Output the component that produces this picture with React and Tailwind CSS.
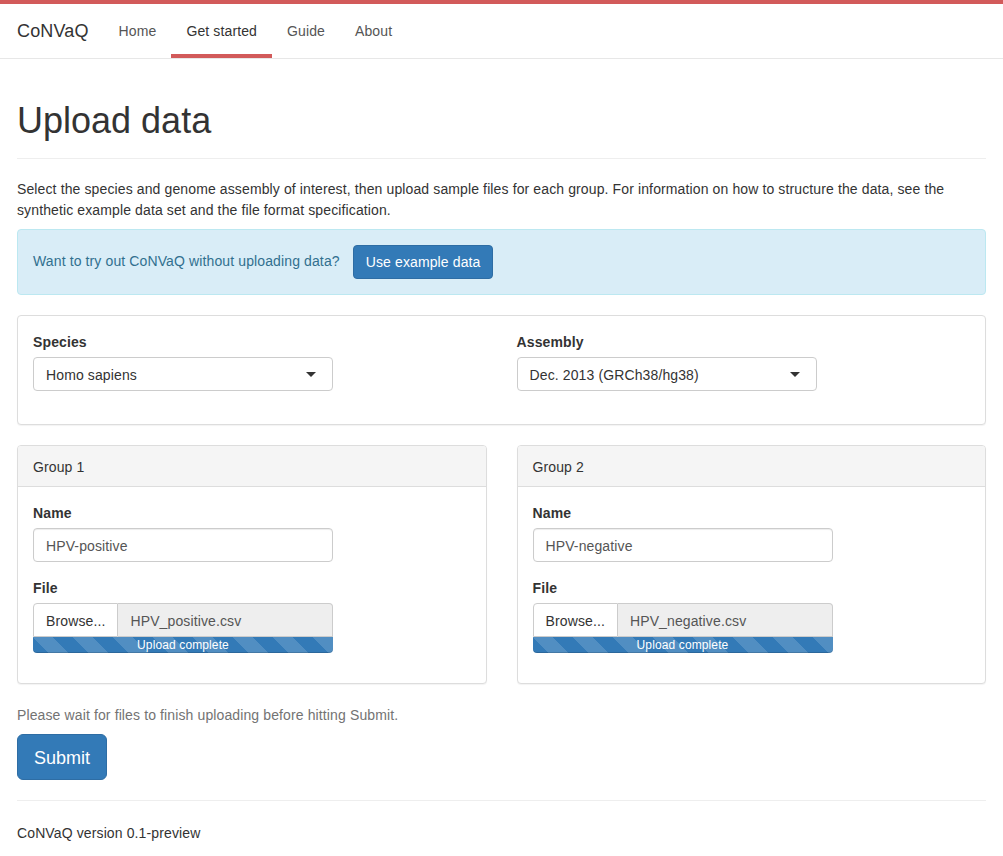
import React from "react";

const font = { fontFamily: '"Liberation Sans", Arial, Helvetica, sans-serif' };

function Caret() {
  return (
    <svg width="10" height="5" viewBox="0 0 10 5" className="block">
      <path d="M0 0 L10 0 L5 5 Z" fill="#333" />
    </svg>
  );
}

function SelectBox({ value }) {
  return (
    <div className="w-[300px] h-[34px] border border-[#ccc] rounded-[4px] bg-white flex items-center justify-between pl-[12px] pr-[16px] pt-[1px] text-[14px] leading-[20px] text-[#333]">
      <span>{value}</span>
      <Caret />
    </div>
  );
}

function Label({ children }) {
  return <div className="text-[14px] leading-[20px] font-bold text-[#333] mb-[5px]">{children}</div>;
}

function GroupPanel({ title, name, file }) {
  return (
    <div className="border border-[#ddd] rounded-[4px] bg-white shadow-[0_1px_1px_rgba(0,0,0,0.05)]">
      <div className="bg-[#f5f5f5] border-b border-[#ddd] rounded-t-[3px] px-[15px] pt-[11px] pb-[9px] text-[14px] leading-[20px] text-[#333]">
        {title}
      </div>
      <div className="px-[15px] pt-[16px] pb-[15px]">
        <div className="mb-[16px]">
          <Label>Name</Label>
          <div className="w-[300px] h-[34px] border border-[#ccc] rounded-[4px] bg-white flex items-center px-[12px] pt-[2px] text-[14px] text-[#555] shadow-[inset_0_1px_1px_rgba(0,0,0,0.075)]">
            {name}
          </div>
        </div>
        <div className="mb-[15px]">
          <Label>File</Label>
          <div className="w-[300px]">
            <div className="flex h-[34px]">
              <div className="h-[34px] border border-[#ccc] rounded-tl-[4px] bg-white flex items-center px-[12px] pt-[2px] text-[14px] text-[#333]">
                Browse...
              </div>
              <div className="flex-1 h-[34px] border border-l-0 border-[#ccc] rounded-tr-[4px] bg-[#eee] flex items-center px-[12px] pt-[2px] text-[14px] text-[#555]">
                {file}
              </div>
            </div>
            <div
              className="h-[16px] rounded-b-[4px] bg-[#337ab7] text-white text-[12px] leading-[16px] text-center shadow-[inset_0_-1px_0_rgba(0,0,0,0.15)]"
              style={{
                backgroundImage:
                  "linear-gradient(45deg, rgba(255,255,255,.15) 25%, transparent 25%, transparent 50%, rgba(255,255,255,.15) 50%, rgba(255,255,255,.15) 75%, transparent 75%, transparent)",
                backgroundSize: "40px 40px",
              }}
            >
              Upload complete
            </div>
          </div>
        </div>
      </div>
    </div>
  );
}

export default function App() {
  return (
    <div style={font} className="min-h-[856px] bg-white text-[#333] text-[14px] tracking-[0.12px]">
      {/* Navbar */}
      <div className="border-t-4 border-[#d25a5a] bg-white border-b border-b-[#e7e7e7]">
        <div className="h-[54px] flex items-start pl-[17px]">
          <div className="pt-[17px] text-[18px] leading-[20px] text-[#333] pr-[15px] tracking-[0.15px]">CoNVaQ</div>
          <div className="h-[54px] px-[15px] pt-[17px] text-[14px] leading-[20px] text-[#555]">Home</div>
          <div className="h-[54px] px-[15px] pt-[17px] text-[14px] leading-[20px] text-[#333] border-b-4 border-[#d25a5a]">
            Get started
          </div>
          <div className="h-[54px] px-[15px] pt-[17px] text-[14px] leading-[20px] text-[#555]">Guide</div>
          <div className="h-[54px] px-[15px] pt-[17px] text-[14px] leading-[20px] text-[#555]">About</div>
        </div>
      </div>

      <div className="px-[17px]">
        <div className="mt-[42px] pb-[17px] border-b border-[#eee]">
          <h1 className="text-[36px] leading-[40px] font-normal text-[#333] tracking-normal">Upload data</h1>
        </div>

        <p className="mt-[20px] text-[14px] leading-[21px] text-[#333]">
          Select the species and genome assembly of interest, then upload sample files for each group. For information on how to structure the data, see the synthetic example data set and the file format specification.
        </p>

        <div className="mt-[8px] border border-[#bce8f1] bg-[#d9edf7] rounded-[4px] p-[15px] flex items-center gap-[13px]">
          <span className="text-[#31708f] text-[14px] leading-[20px] mb-[3px]">Want to try out CoNVaQ without uploading data?</span>
          <div className="h-[34px] px-[12px] flex items-center bg-[#337ab7] border border-[#2e6da4] rounded-[4px] text-white text-[14px]">
            Use example data
          </div>
        </div>

        <div className="mt-[20px] border border-[#ddd] rounded-[4px] bg-white px-[15px] pt-[16px] pb-[33px] grid grid-cols-2 gap-[30px] shadow-[0_1px_1px_rgba(0,0,0,0.05)]">
          <div>
            <Label>Species</Label>
            <SelectBox value="Homo sapiens" />
          </div>
          <div>
            <Label>Assembly</Label>
            <SelectBox value="Dec. 2013 (GRCh38/hg38)" />
          </div>
        </div>

        <div className="mt-[20px] grid grid-cols-2 gap-[30px]">
          <GroupPanel title="Group 1" name="HPV-positive" file="HPV_positive.csv" />
          <GroupPanel title="Group 2" name="HPV-negative" file="HPV_negative.csv" />
        </div>

        <div className="mt-[21px] text-[14px] leading-[20px] text-[#737373]">
          Please wait for files to finish uploading before hitting Submit.
        </div>

        <div className="mt-[9px]">
          <div className="inline-flex items-center h-[46px] px-[16px] pt-[1px] bg-[#337ab7] border border-[#2e6da4] rounded-[6px] text-white text-[18px] leading-[24px] tracking-normal">
            Submit
          </div>
        </div>

        <div className="mt-[20px] border-t border-[#eee]"></div>

        <div className="pt-[22px] text-[14px] leading-[20px] text-[#333]">CoNVaQ version 0.1-preview</div>
      </div>
    </div>
  );
}
